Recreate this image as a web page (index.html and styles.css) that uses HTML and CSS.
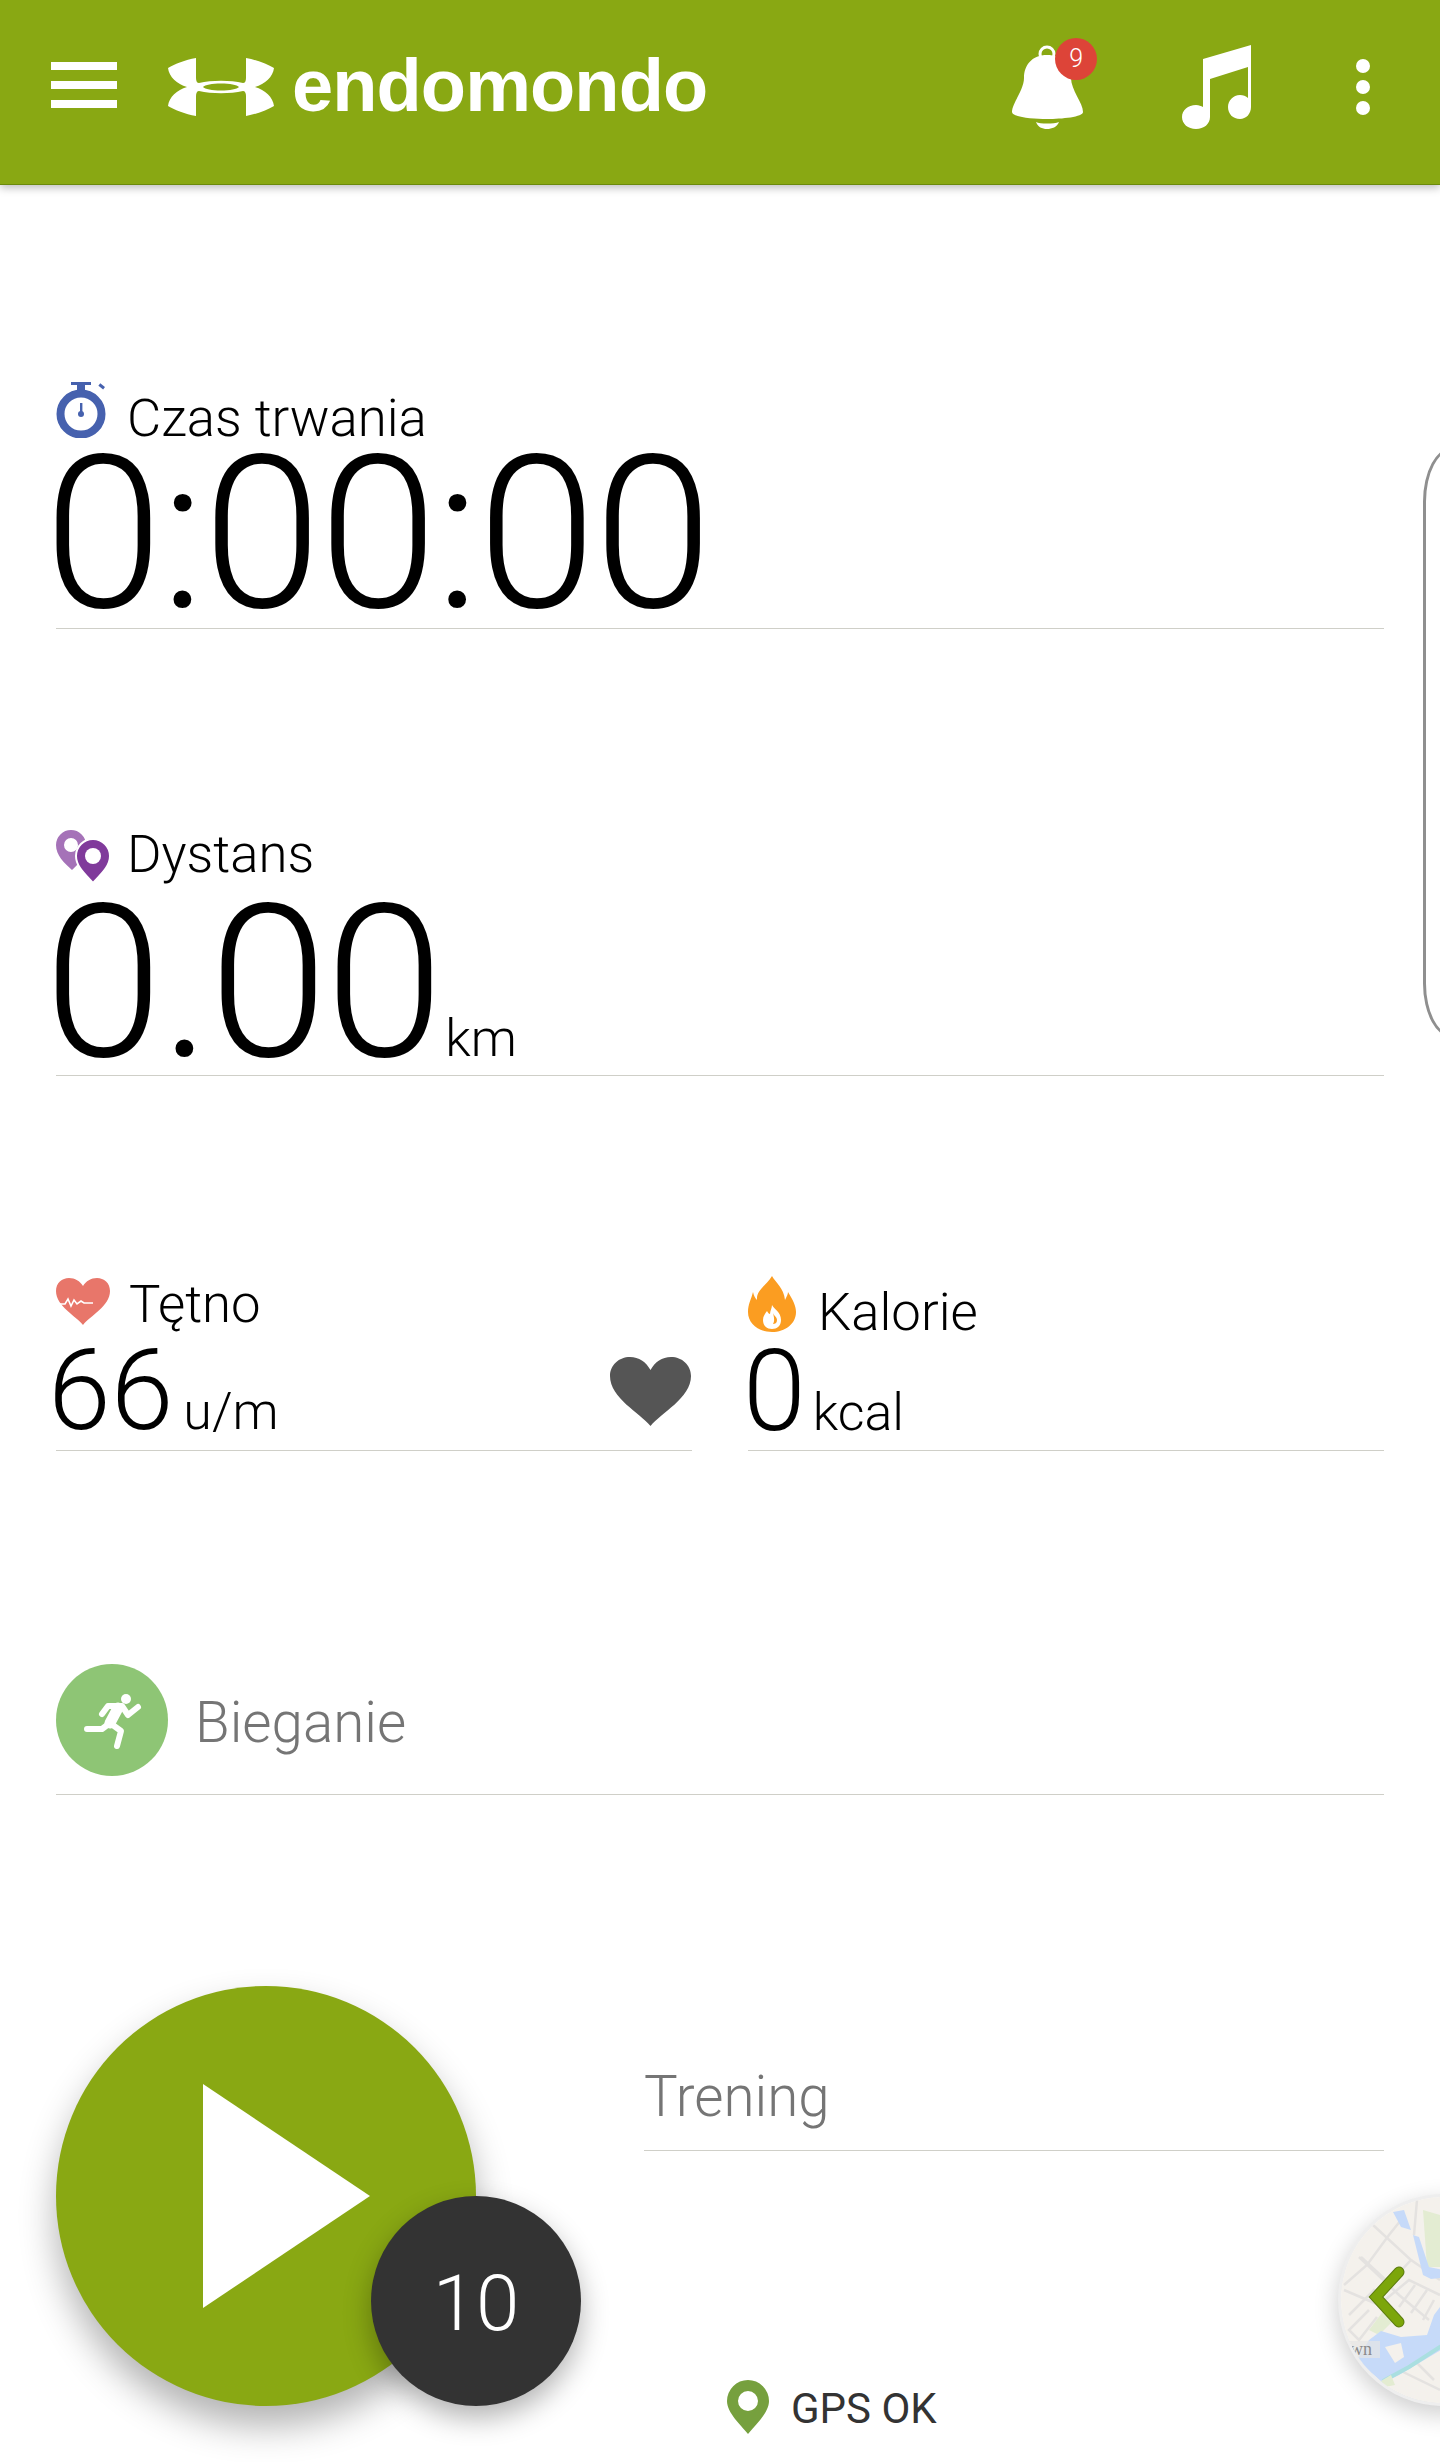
FILE: index.html
```html
<!DOCTYPE html>
<html lang="pl">
<head>
<meta charset="UTF-8">
<meta name="viewport" content="width=device-width, initial-scale=1.0">
<title>Endomondo</title>
<link rel="stylesheet" href="styles.css">
</head>
<body>
    <header class="topbar">
        <div class="menu-icon"><span></span><span></span><span></span></div>
        <svg class="ua-logo" viewBox="0 0 106 58">
            <path fill-rule="evenodd" d="M28 0C17 2 7 6 0 10C1 19 9 26 19 29C9 32 1 39 0 48C7 52 17 56 28 58L28 38C28 35 29 33 31 33C44 36 62 36 75 33C77 33 78 35 78 38L78 58C89 56 99 52 106 48C105 39 97 32 87 29C97 26 105 19 106 10C99 6 89 2 78 0L78 20C78 23 77 25 75 25C62 22 44 22 31 25C29 25 28 23 28 20ZM53 25.5C62 25.5 69 27 71 29C69 31 62 32.5 53 32.5C44 32.5 37 31 35 29C37 27 44 25.5 53 25.5Z"/>
        </svg>
        <div class="brand">endomondo</div>
        <div class="bell">
            <svg class="bell-icon" viewBox="0 0 71 84">
                <circle class="bell-ring" cx="35" cy="9" r="7"/>
                <path d="M35 10C20 10 12 20 12 33C12 45 0 58 0 67C0 72 20 74 35 74C50 74 71 72 71 67C71 58 59 45 59 33C59 20 50 10 35 10Z"/>
                <path d="M24 77C28 79 42 79 47 77C45 82 40 84 35 84C30 84 26 82 24 77Z"/>
            </svg>
            <span class="badge">9</span>
        </div>
        <svg class="music-icon" viewBox="0 0 69 84">
            <path d="M21 14L69 0V62C69 69 64 74 58 74C51 74 46 69 46 62C46 56 51 50 58 50C61 50 64 51 66 53V22L28 34V72C28 79 22 84 14 84C6 84 0 79 0 72C0 65 6 60 14 60C17 60 19 61 21 62Z"/>
        </svg>
        <div class="dots"><span></span><span></span><span></span></div>
    </header>

    <div class="side-panel"></div>

    <main class="content">
        <section class="metric metric-time">
            <div class="metric-label">
                <svg class="icon-watch" viewBox="0 0 50 56">
                    <rect x="15" y="0" width="20" height="3" fill="#4661ae"/>
                    <rect x="21" y="2" width="8" height="7" fill="#4661ae"/>
                    <rect x="43" y="3" width="6" height="3" transform="rotate(38 46 4)" fill="#4661ae"/>
                    <circle cx="25" cy="32" r="20.5" fill="none" stroke="#4661ae" stroke-width="8"/>
                    <rect x="24" y="21" width="2.4" height="10" fill="#4661ae"/>
                    <circle cx="25" cy="32" r="3" fill="#4661ae"/>
                </svg>
                <span>Czas trwania</span>
            </div>
            <div class="metric-value big">0:00:00</div>
        </section>

        <section class="metric metric-distance">
            <div class="metric-label">
                <svg class="icon-pins" viewBox="0 0 54 53">
                    <path fill="#a572b8" fill-rule="evenodd" d="M16 40C8 33 0 25 0 15A15 15 0 0 1 30 15C30 25 24 33 16 40ZM15 8A7 7 0 1 0 15 22A7 7 0 1 0 15 8Z"/>
                    <path fill="#803a9b" stroke="#fff" stroke-width="2" d="M37 53C30 45 20 37 20 26A17 17 0 0 1 54 26C54 37 44 45 37 53Z"/>
                    <circle cx="37" cy="26" r="8" fill="#fff"/>
                </svg>
                <span>Dystans</span>
            </div>
            <div class="metric-value big">0.00<span class="unit unit-km">km</span></div>
        </section>

        <div class="metric-row">
            <section class="metric metric-small metric-heart">
                <div class="metric-label">
                    <svg class="icon-heart" viewBox="0 0 54 47">
                        <path fill="#e8766a" d="M27 47C20 38 0 28 0 13C0 5 6 0 13 0C19 0 24 3 27 8C30 3 35 0 41 0C48 0 54 5 54 13C54 28 34 38 27 47Z"/>
                        <polyline fill="none" stroke="#fff" stroke-width="1.6" points="3,26 9,26 12,21 15,28 18,22 21,26 25,23 28,25 37,25"/>
                    </svg>
                    <span>Tętno</span>
                </div>
                <div class="metric-value medium">66<span class="unit">u/m</span></div>
                <svg class="heart-btn" viewBox="0 0 81 69">
                    <path d="M40.500 69C30 56 0 41 0 19C0 8 9 0 20 0C29 0 36 5 40.500 13C45 5 52 0 61 0C72 0 81 8 81 19C81 41 51 56 40.500 69Z"/>
                </svg>
            </section>
            <section class="metric metric-small metric-kcal">
                <div class="metric-label">
                    <svg class="icon-flame" viewBox="0 0 48 56">
                        <path fill="#fb9d21" d="M24 0C27 6 36 12 37 24C39 20 40 18 40 16C45 24 48 30 48 36C48 48 37 56 24 56C11 56 0 48 0 36C0 28 3 24 5 16C6 20 7 22 9 24C8 14 18 10 24 0Z"/>
                        <path fill="#fff" d="M24 29C26 33 33 36 33 44C33 50 29 53 24 53C19 53 15 50 15 44C15 40 17 38 19 35C20 37 21 38 22 38C22 35 24 32 24 29Z"/>
                        <path fill="#fb9d21" d="M25 37C26 40 29 41 29 44C29 47 27 48 25 48C27 45 26 41 25 37Z"/>
                    </svg>
                    <span>Kalorie</span>
                </div>
                <div class="metric-value medium">0<span class="unit">kcal</span></div>
            </section>
        </div>

        <section class="activity">
            <div class="activity-circle">
                <svg viewBox="0 0 112 112">
                    <circle cx="70" cy="35" r="5" fill="#fff"/>
                    <polyline class="limb" points="46,50 52,42 66,42 72,51 82,43"/>
                    <polyline class="torso" points="62,44 54,59"/>
                    <polyline class="limb" points="31,65 46,65 54,59 65,67 61,82"/>
                </svg>
            </div>
            <span class="activity-name">Bieganie</span>
        </section>

        <section class="bottom">
            <div class="play-wrap">
                <div class="play-btn">
                    <svg viewBox="0 0 167 224"><polygon points="0,0 167,112 0,224" fill="#fff"/></svg>
                </div>
                <div class="count">10</div>
            </div>
            <div class="bottom-side">
                <div class="workout-name">Trening</div>
                <div class="gps">
                    <svg class="icon-gps" viewBox="0 0 42 54">
                        <path fill="#76a03e" fill-rule="evenodd" d="M21 54C14 45 0 33 0 21A21 21 0 0 1 42 21C42 33 28 45 21 54ZM21 11A10 10 0 1 0 21 31A10 10 0 1 0 21 11Z"/>
                    </svg>
                    <span class="gps-text">GPS OK</span>
                </div>
            </div>
        </section>
    </main>

    <div class="map-btn">
        <svg class="map-img" viewBox="2 2 206 206">
            <rect width="210" height="210" fill="#f4f1ec"/>
            <path fill="#e3ecd2" d="M84 15L101 20V72L88 72Z"/>
            <path fill="#e3ecd2" d="M30 135L45 115L58 122L40 140Z"/>
            <g fill="none" stroke="#e4e2e0" stroke-width="2.500">
                <path d="M5 95L40 110L70 85L101 100"/>
                <path d="M20 62L60 100L90 125"/>
                <path d="M34 30L72 65L50 88L22 62"/>
                <path d="M10 120L35 95L60 120"/>
                <path d="M5 90L28 70L50 40L62 25"/>
                <path d="M72 65L101 85"/>
                <path d="M30 115L10 135L20 145L38 122"/>
                <path d="M76 90L60 112M88 95L72 118M95 105L84 125"/>
                <path d="M78 5L75 40"/>
                <path d="M60 175L101 195M75 165L95 185"/>
            </g>
            <g fill="#c6daf9">
                <path d="M54 17L65 15L72 35L62 32Z"/>
                <path d="M74 40L80 42L90 72L110 76V82L92 84L84 80Z"/>
                <path d="M18 165L30 145L42 136L62 142L88 140L95 120L110 100V150L60 180L44 188Z"/>
            </g>
            <path fill="none" stroke="#aadfe0" stroke-width="4" d="M44 186L70 172L110 146"/>
            <path fill="#f4f1ec" d="M46 152L62 148L65 162L56 168Z"/>
            <path fill="#e3ecd2" d="M42 186L52 180L56 190L46 192Z"/>
            <path fill="#e6e6e6" d="M9 146H41V163H9Z" opacity=".7"/>
            <text x="11" y="160" class="map-text">wn</text>
            <polyline class="chevron-edge" points="60,77 37,102 60,127"/>
            <polyline class="chevron" points="60,77 37,102 60,127"/>
        </svg>
    </div>
</body>
</html>
```

FILE: styles.css
```css
body {
    margin: 0;
    width: 1440px;
    height: 2462px;
    overflow: hidden;
    position: relative;
    background-color: #fff;
    font-family: Roboto, "Liberation Sans", sans-serif;
    color: #000;
}

.topbar {
    height: 184px;
    background-color: #89a813;
    border-bottom: 1px solid #6b8a0c;
    box-shadow: 0 3px 8px rgba(0, 0, 0, 0.25);
    display: flex;
    align-items: flex-start;
    position: relative;
}

.menu-icon {
    width: 66px;
    margin: 62px 0 0 51px;
    display: flex;
    flex-direction: column;
    gap: 11px;
}

.menu-icon span {
    display: block;
    height: 8px;
    background-color: #fff;
}

.ua-logo {
    width: 106px;
    height: 58px;
    margin: 58px 0 0 51px;
    fill: #fff;
}

.brand {
    margin: 44px 0 0 18px;
    font-family: "Liberation Sans", Arial, sans-serif;
    font-weight: bold;
    font-size: 74px;
    line-height: 84px;
    letter-spacing: -0.9px;
    color: #fff;
}

.bell {
    position: relative;
    width: 71px;
    height: 84px;
    margin: 45px 0 0 305px;
}

.bell-icon {
    display: block;
    width: 71px;
    height: 84px;
    fill: #fff;
}

.bell-ring {
    fill: none;
    stroke: #fff;
    stroke-width: 3;
}

.badge {
    position: absolute;
    left: 43px;
    top: -7px;
    width: 42px;
    height: 42px;
    border-radius: 50%;
    background-color: #dd4438;
    color: #fff;
    font-size: 25px;
    font-weight: 300;
    line-height: 42px;
    text-align: center;
}

.music-icon {
    width: 69px;
    height: 84px;
    margin: 45px 0 0 99px;
    fill: #fff;
}

.dots {
    margin: 59px 0 0 105px;
    display: flex;
    flex-direction: column;
    gap: 7px;
}

.dots span {
    display: block;
    width: 14px;
    height: 14px;
    border-radius: 50%;
    background-color: #fff;
}

.content {
    padding: 0 56px;
}

.metric {
    border-bottom: 1px solid #cfcfc8;
    position: relative;
}

.metric-label {
    display: flex;
    align-items: center;
    font-size: 52.7px;
    font-weight: 300;
    line-height: 60px;
}

.metric-value {
    font-weight: 300;
    white-space: nowrap;
}

.metric-value.big {
    font-size: 214px;
    line-height: 170px;
    margin-left: -12px;
    letter-spacing: -2.5px;
}

.metric-value.medium {
    font-size: 113px;
    line-height: 84px;
    margin-left: -8px;
}

.unit {
    font-size: 52px;
    margin-left: 10px;
    letter-spacing: 0;
}

.unit-km {
    margin-left: 4px;
}

.metric-time {
    margin-top: 204px;
    height: 239px;
}

.metric-time .metric-label {
    gap: 21px;
    line-height: 58px;
    margin-bottom: 2px;
}

.icon-watch {
    width: 50px;
    height: 56px;
    margin-top: -16px;
}

.metric-distance {
    margin-top: 193px;
    height: 253px;
}

.metric-distance .metric-label {
    gap: 17px;
    padding-top: 2px;
}

.icon-pins {
    width: 54px;
    height: 53px;
    margin-top: 4px;
}

.metric-distance .metric-value {
    margin-top: 14px;
}

.metric-row {
    display: flex;
    gap: 56px;
    margin-top: 199px;
}

.metric-small {
    width: 636px;
    height: 175px;
}

.metric-heart .metric-label {
    gap: 19px;
    line-height: 58px;
    margin-bottom: 2px;
}

.metric-heart .metric-value {
    margin-top: 16px;
}

.icon-heart {
    width: 54px;
    height: 47px;
    margin-top: -6px;
}

.metric-kcal .metric-label {
    gap: 22px;
    padding-top: 7px;
}

.metric-kcal .metric-value {
    margin-top: 8px;
    margin-left: -5px;
}

.metric-kcal .unit {
    margin-left: 7px;
}

.icon-flame {
    width: 48px;
    height: 56px;
    margin-top: -16px;
}

.heart-btn {
    position: absolute;
    right: 1px;
    top: 82px;
    width: 81px;
    height: 69px;
    fill: #555;
}

.activity {
    margin-top: 213px;
    height: 130px;
    border-bottom: 1px solid #cfcfc8;
    display: flex;
    align-items: flex-start;
    gap: 27px;
}

.activity-circle {
    width: 112px;
    height: 112px;
    border-radius: 50%;
    background-color: #8ec575;
}

.activity-circle svg {
    display: block;
    width: 112px;
    height: 112px;
}

.limb {
    fill: none;
    stroke: #fff;
    stroke-width: 6;
    stroke-linecap: round;
    stroke-linejoin: round;
}

.torso {
    fill: none;
    stroke: #fff;
    stroke-width: 11;
    stroke-linecap: round;
}

.activity-name {
    font-size: 56.5px;
    font-weight: 300;
    color: #757575;
    line-height: 112px;
    margin-top: 3px;
}

.bottom {
    display: flex;
    margin-top: 191px;
}

.play-wrap {
    position: relative;
    width: 420px;
    height: 420px;
}

.play-btn {
    width: 420px;
    height: 420px;
    border-radius: 50%;
    background-color: #89a813;
    box-shadow: 0 20px 36px rgba(0, 0, 0, 0.3);
    display: flex;
    align-items: center;
}

.play-btn svg {
    width: 167px;
    height: 224px;
    margin-left: 147px;
}

.count {
    position: absolute;
    left: 315px;
    top: 210px;
    width: 210px;
    height: 210px;
    border-radius: 50%;
    background-color: #333;
    box-shadow: 0 12px 28px rgba(0, 0, 0, 0.3);
    color: #fff;
    font-size: 78px;
    font-weight: 300;
    line-height: 216px;
    text-align: center;
}

.bottom-side {
    margin-left: 168px;
    width: 740px;
}

.workout-name {
    padding-top: 81px;
    height: 83px;
    border-bottom: 1px solid #cfcfc8;
    font-size: 56.5px;
    font-weight: 300;
    color: #757575;
    line-height: 60px;
}

.gps {
    display: flex;
    align-items: center;
    gap: 22px;
    margin: 229px 0 0 83px;
    font-size: 42px;
    color: #333;
}

.gps-text {
    margin-top: 2px;
}

.icon-gps {
    width: 42px;
    height: 54px;
}

.side-panel {
    position: absolute;
    left: 1423px;
    top: 447px;
    width: 60px;
    height: 591px;
    box-sizing: border-box;
    border: 3px solid #8f8f8f;
    border-radius: 44px / 80px;
}

.map-btn {
    position: absolute;
    left: 1341px;
    top: 2197px;
    width: 206px;
    height: 206px;
    border-radius: 50%;
    overflow: hidden;
    box-shadow: 0 0 0 3px #eee, 0 8px 24px 3px rgba(0, 0, 0, 0.2);
}

.map-img {
    display: block;
    width: 206px;
    height: 206px;
}

.map-text {
    font-family: "Liberation Serif", serif;
    font-size: 18px;
    fill: #8a8a8a;
}

.chevron {
    fill: none;
    stroke: #7ca60a;
    stroke-width: 9;
    stroke-linecap: round;
    stroke-linejoin: miter;
}

.chevron-edge {
    fill: none;
    stroke: #5d7d10;
    stroke-width: 11;
    stroke-linecap: round;
    stroke-linejoin: miter;
}
```
